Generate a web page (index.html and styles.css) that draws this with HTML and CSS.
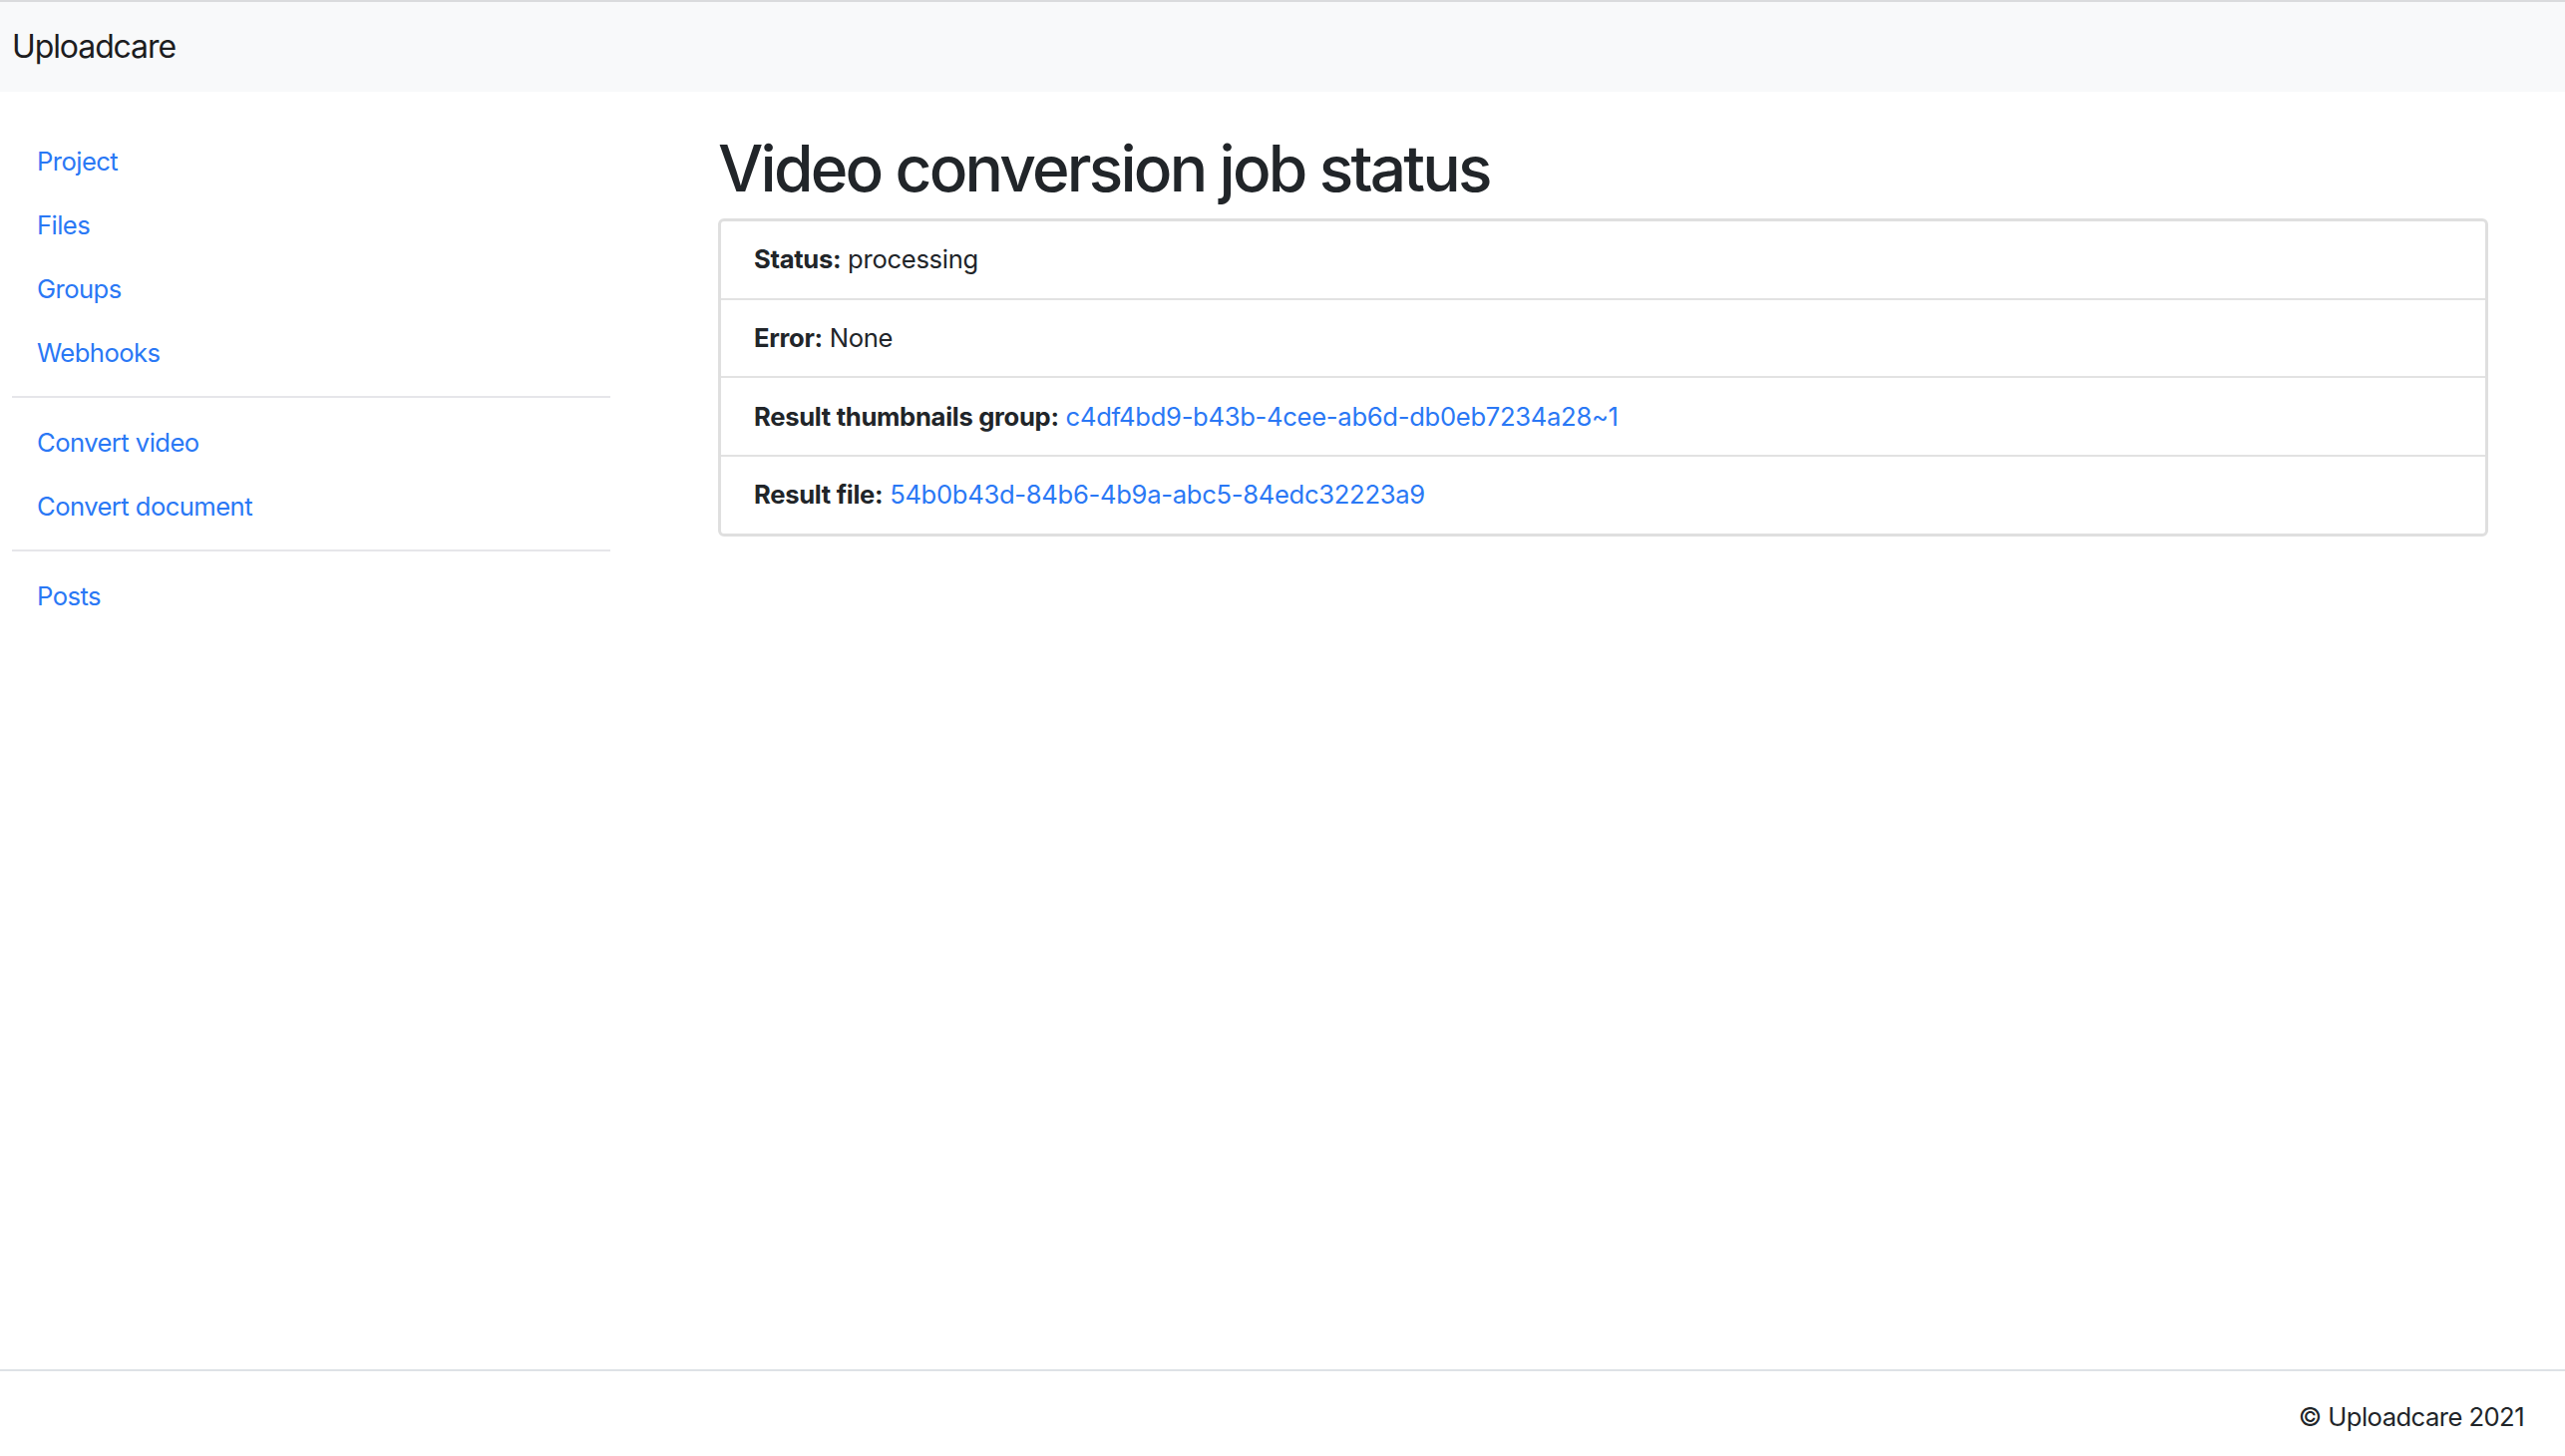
FILE: index.html
```html
<!DOCTYPE html>
<html lang="en">
<head>
<meta charset="utf-8">
<title>Video conversion job status</title>
<link rel="stylesheet" href="styles.css">
</head>
<body>
<header class="navbar">
  <a class="brand" href="#">Uploadcare</a>
</header>
<div class="layout">
  <nav class="sidebar">
    <a class="nav-link" href="#">Project</a>
    <a class="nav-link" href="#">Files</a>
    <a class="nav-link" href="#">Groups</a>
    <a class="nav-link" href="#">Webhooks</a>
    <hr class="divider">
    <a class="nav-link" href="#">Convert video</a>
    <a class="nav-link" href="#">Convert document</a>
    <hr class="divider">
    <a class="nav-link" href="#">Posts</a>
  </nav>
  <main class="content">
    <h1 class="title">Video conversion job status</h1>
    <ul class="list">
      <li class="item"><b>Status:</b> processing</li>
      <li class="item"><b>Error:</b> None</li>
      <li class="item"><b>Result thumbnails group:</b> <a href="#">c4df4bd9-b43b-4cee-ab6d-db0eb7234a28~1</a></li>
      <li class="item"><b>Result file:</b> <a href="#">54b0b43d-84b6-4b9a-abc5-84edc32223a9</a></li>
    </ul>
  </main>
</div>
<footer class="footer">
  <span>© Uploadcare 2021</span>
</footer>
</body>
</html>
```

FILE: styles.css
```css
* { box-sizing: border-box; }
html, body { margin: 0; padding: 0; }
body {
  font-family: Inter, "Noto Sans", "Liberation Sans", sans-serif;
  font-size: 25.6px;
  line-height: 38.4px;
  letter-spacing: -0.55px;
  color: #212529;
  background: #fff;
  min-height: 100vh;
  display: flex;
  flex-direction: column;
}
a { color: #2a78f5; text-decoration: none; }

.navbar {
  border-top: 2px solid #dadbdd;
  background: #f8f9fa;
  height: 92px;
  display: flex;
  align-items: center;
  padding-left: 12px;
}
.brand {
  color: #1d1d1f;
  font-size: 32px;
  line-height: 48px;
  letter-spacing: -1.1px;
}

.layout {
  flex: 1;
  display: flex;
}
.sidebar {
  width: 612px;
  padding: 38px 0 0 12px;
  display: flex;
  flex-direction: column;
  flex-shrink: 0;
}
.nav-link {
  display: block;
  padding: 12.8px 25px;
  line-height: 38.4px;
}
.divider {
  border: 0;
  border-top: 2px solid #e6e6ea;
  margin: 11px 0 13px;
}

.content {
  flex: 1;
  margin-left: 108px;
  padding: 38px 77px 0 0;
}
.title {
  margin: 0 0 11px;
  font-size: 64px;
  line-height: 76.8px;
  font-weight: 500;
  letter-spacing: -2.8px;
  color: #212529;
  padding-top: 1px;
}
.list {
  list-style: none;
  margin: 0;
  padding: 0;
  border: 3px solid #dfdfdf;
  border-radius: 6px;
}
.item {
  padding: 19.2px 33px;
  line-height: 38.4px;
  letter-spacing: -0.3px;
}
.item + .item { border-top: 2px solid #e2e2e2; }
.item b { font-weight: 700; }

.footer {
  border-top: 2px solid #dee2e6;
  height: 87px;
  padding: 27px 41px 0 0;
  display: flex;
  justify-content: flex-end;
  align-items: flex-start;
}
```
